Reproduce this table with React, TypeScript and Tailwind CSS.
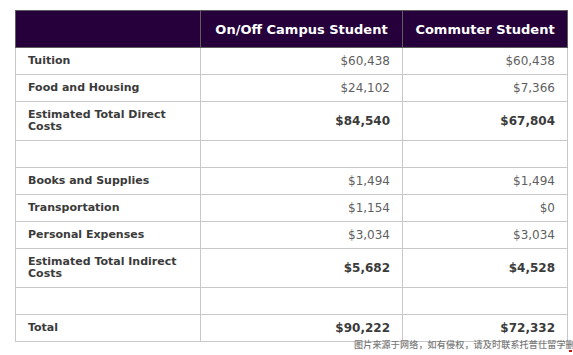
import React from "react";

type Row = {
  label: string;
  campus?: string;
  commuter?: string;
  bold?: boolean;
  tall?: boolean;
};

const rows: Row[] = [
  { label: "Tuition", campus: "$60,438", commuter: "$60,438" },
  { label: "Food and Housing", campus: "$24,102", commuter: "$7,366" },
  { label: "Estimated Total Direct Costs", campus: "$84,540", commuter: "$67,804", bold: true, tall: true },
  { label: "" },
  { label: "Books and Supplies", campus: "$1,494", commuter: "$1,494" },
  { label: "Transportation", campus: "$1,154", commuter: "$0" },
  { label: "Personal Expenses", campus: "$3,034", commuter: "$3,034" },
  { label: "Estimated Total Indirect Costs", campus: "$5,682", commuter: "$4,528", bold: true, tall: true },
  { label: "" },
  { label: "Total", campus: "$90,222", commuter: "$72,332", bold: true },
];

const App: React.FC = () => {
  return (
    <div
      className="relative w-[573px] h-[355px] bg-white overflow-hidden pt-[10px] pl-[15px]"
      style={{ fontFamily: '"DejaVu Sans", "Liberation Sans", sans-serif' }}
    >
      <table className="border-collapse w-[552px] table-fixed">
        <colgroup>
          <col className="w-[185px]" />
          <col className="w-[202px]" />
          <col className="w-[165px]" />
        </colgroup>
        <thead>
          <tr className="h-[37px] bg-[#25003a]">
            <th className="border border-[#5e5e5e]" />
            <th className="border border-[#5e5e5e] text-white text-[13px] font-bold text-center pt-[1px]">
              On/Off Campus Student
            </th>
            <th className="border border-[#5e5e5e] text-white text-[13px] font-bold text-center pt-[1px]">
              Commuter Student
            </th>
          </tr>
        </thead>
        <tbody>
          {rows.map((row, i) => (
            <tr key={i} className={row.tall ? "h-[39px]" : "h-[27px]"}>
              <td className="border border-[#c8c8c8] pl-[12px] pr-2 text-[11px] leading-[12px] font-bold text-[#3b3b3b] align-middle">
                {row.label}
              </td>
              <td
                className={`border border-[#c8c8c8] pr-[12px] text-right text-[12px] ${
                  row.bold ? "font-bold text-[#3b3b3b]" : "font-normal text-[#5f5f5f]"
                }`}
              >
                {row.campus}
              </td>
              <td
                className={`border border-[#c8c8c8] pr-[12px] text-right text-[12px] ${
                  row.bold ? "font-bold text-[#3b3b3b]" : "font-normal text-[#5f5f5f]"
                }`}
              >
                {row.commuter}
              </td>
            </tr>
          ))}
        </tbody>
      </table>

      {/* watermark, clipped at the right edge like the source */}
      <div
        className="absolute left-[354px] top-[339px] whitespace-nowrap text-[9px] leading-[12px] font-medium tracking-[0.2px] text-[#7a7a7a]"
        style={{ fontFamily: '"Noto Sans CJK SC", sans-serif' }}
      >
        图片来源于网络，如有侵权，请及时联系托普仕留学删除
      </div>
      <div className="absolute left-[569px] top-[350px] w-[3px] h-[2px] bg-[#d01010]" />
    </div>
  );
};

export default App;
